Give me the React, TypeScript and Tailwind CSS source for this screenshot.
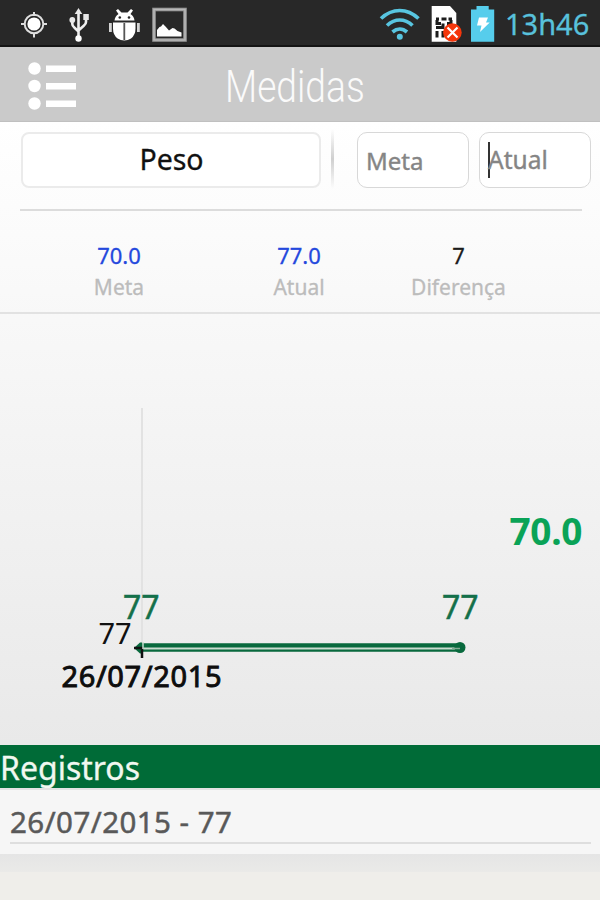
import React from "react";

const stats = [
  { value: "70.0", label: "Meta", color: "text-[#2448dd]", box: "w-[238px]" },
  { value: "77.0", label: "Atual", color: "text-[#2448dd]", box: "w-[122px]" },
  { value: "7", label: "Diferença", color: "text-[#1c1c1c]", box: "w-[197px]" },
];

const StatusBar: React.FC = () => (
  <div className="flex h-[47px] shrink-0 items-start border-b-2 border-[#141414] bg-[#282828]">
    <svg className="shrink-0" width="500" height="45" viewBox="0 0 500 45">
      {/* gps */}
      <g stroke="#dedede" fill="none" strokeWidth="2">
        <circle cx="34" cy="24" r="9.3" />
        <path d="M34 12v4M34 33v4.5M21 24h4M43 24h4" />
        <circle cx="34" cy="24" r="6.6" fill="#fff" stroke="none" />
      </g>
      {/* usb */}
      <g stroke="#f0f0f0" fill="none" strokeWidth="2.6">
        <path d="M78.5 13v25M72.3 20v4q0 2 2 3.5l4.200 4M86 17v5q0 2-2 3.500l-5.500 5" />
        <path d="M78.5 8l3.8 6h-7.600z" fill="#e8e8e8" stroke="none" />
        <circle cx="78.5" cy="38.500" r="3.2" fill="#fff" stroke="none" />
        <circle cx="72.3" cy="20" r="2.900" fill="#e8e8e8" stroke="none" />
        <rect x="83.300" y="14" width="5.500" height="6" fill="#e8e8e8" stroke="none" />
      </g>
      {/* debug bug */}
      <g fill="#fff">
        <path d="M114.500 20.500q.5-4.500 4-6.500l-2.500-3.500 2-1.500 3.500 3.500h6l3.500-3.500 2 1.500-2.500 3.500q3.500 2 4 6.500z" />
        <path d="M113 22.500h22.500v6q0 6.500-4.500 10-3 2-6.700 2t-6.700-2q-4.600-3.500-4.600-10z" />
        <path d="M124.300 23v17" stroke="#555" strokeWidth="1.800" />
        <circle cx="119.800" cy="17.500" r="1.300" fill="#282828" />
        <circle cx="129" cy="17.500" r="1.300" fill="#282828" />
        <path d="M109 23h2.800v9h-2.800zM137 23h2.800v9h-2.800z" fill="#d5d5d5" />
      </g>
      {/* picture */}
      <rect x="154" y="9.500" width="31" height="30.500" fill="none" stroke="#959595" strokeWidth="3.600" />
      <rect x="154" y="9.500" width="31" height="30.500" fill="none" stroke="#b8b8b8" strokeWidth="1.500" />
      <path d="M157 36.500v-6.500l2.500-3 1.500-.5 2-2.500 2.500 2.500 3.500 4 3.500-2.500 2 .5 3 2.500 4 1.500v4z" fill="#fff" />
      {/* wifi */}
      <g fill="none" stroke="#58c5e0" strokeWidth="3.700">
        <path d="M381 18.500q8.500-8 18.700-8t18.800 8" />
        <path d="M387 25.500q6-5.500 12.800-5.500t12.700 5.500" />
        <path d="M392.500 32q3.500-3 7.300-3t7.200 3" />
        <circle cx="399.800" cy="36.800" r="3" fill="#58c5e0" stroke="none" />
      </g>
      {/* sim card */}
      <path d="M431.700 6h18.300l6.300 7v28.700h-24.600z" fill="#fff" />
      <g stroke="#1d1d1d" strokeWidth="3" fill="none">
        <path d="M436 19h3M441.500 19h5M448.500 19h3.500M437 20v3.500h4M451 20v3.500h-4M436 27.500h7v-4M447 26.500h5M437 31v6.500M443 31v6.500" />
      </g>
      <circle cx="452.400" cy="32.500" r="9.300" fill="#f5360b" />
      <path d="M447.500 27.500l10 10M457.500 27.500l-10 10" stroke="#fff" strokeWidth="2.200" />
      {/* battery */}
      <path d="M471 9.500h5.500v-3.500h12.200v3.500h5.500v32.300h-23.200z" fill="#56cdec" />
      <path d="M479 17.500h9l-2 5h3.700l-9.700 9.500 1.500-6.500h-4.500z" fill="#fff" />
    </svg>
    <span className="ml-[5px] mt-[4px] text-[29px] leading-[40px] text-[#58c1dc] [-webkit-text-stroke:0.3px_#58c1dc]">13h46</span>
  </div>
);

const Header: React.FC = () => (
  <header className="flex h-[75px] shrink-0 items-center border-b border-[#c0c0c0] bg-[#cacaca] pl-[28px]">
    <svg className="mt-[3px]" width="49" height="50" viewBox="0 0 49 50" fill="#fff">
      <circle cx="6.500" cy="7.500" r="6.200" />
      <circle cx="6.500" cy="25" r="6.200" />
      <circle cx="6.500" cy="42.500" r="6.200" />
      <rect x="18" y="4.500" width="30" height="6.500" />
      <rect x="18" y="22" width="30" height="6.500" />
      <rect x="18" y="39.500" width="30" height="6.500" />
    </svg>
    <h1 className="ml-[148px] mt-[5px] origin-left scale-x-[0.835] font-['Roboto'] text-[44.500px] leading-[50px] font-light text-[#fafafa]">
      Medidas
    </h1>
  </header>
);

const Filters: React.FC = () => (
  <div className="flex h-[87px] shrink-0 pl-[21px] pt-[10px]">
    <button className="h-[56px] w-[300px] rounded-lg border-2 border-[#ebebeb] bg-white pb-px pl-px text-[28.500px] leading-none text-[#111] [-webkit-text-stroke:0.3px_#111]">
      Peso
    </button>
    <div className="ml-[10px] -mt-[3px] h-[60px] w-[3px] bg-linear-to-b from-transparent via-[#cfcfcf] to-transparent" />
    <div className="ml-[23px] flex h-[56px] w-[112px] items-center rounded-[10px] border border-[#d8d8d8] bg-white pt-px pl-[8px] text-[24px] text-[#858585] [-webkit-text-stroke:0.4px_#858585]">
      Meta
    </div>
    <div className="ml-[10px] flex h-[56px] w-[112px] items-center rounded-[10px] border border-[#d8d8d8] bg-white pt-px pl-[8px] text-[24.500px] text-[#858585] [-webkit-text-stroke:0.4px_#858585]">
      <span className="-mr-[2px] -mt-[2px] h-[36px] w-[2px] bg-[#333]" />
      Atual
    </div>
  </div>
);

const Chart: React.FC = () => (
  <svg className="block shrink-0" width="600" height="431" viewBox="0 314 600 431">
    <path d="M142 408v240" stroke="#e2e2e2" strokeWidth="2" />
    <path d="M142 647.500h318" stroke="#08693d" strokeWidth="8.500" />
    <path d="M143 648.500h317" stroke="#c9dccf" strokeWidth="2" />
    <circle cx="460" cy="647.500" r="5.500" fill="#08693d" />
    <path d="M452 648.500h8" stroke="#83aa93" strokeWidth="1.500" />
    <path d="M134 648l6-5.500h2v11h-2z" fill="#08693d" />
    <path d="M134 648h8v10" fill="none" stroke="#111" strokeWidth="2.500" />
    <path d="M143 642v7" stroke="#c9dccf" strokeWidth="1.500" />
    <g fill="#14704a" stroke="#14704a" strokeWidth="0.500" fontSize="32">
      <text x="123" y="619">77</text>
      <text x="442" y="619">77</text>
    </g>
    <text x="98.500" y="643.500" fontSize="29" fill="#111">77</text>
    <text x="61.500" y="686.500" fontSize="29" fill="#0d0d0d" stroke="#0d0d0d" strokeWidth="0.900" textLength="160">
      26/07/2015
    </text>
    <text x="509.500" y="545" fontSize="37" fontWeight="700" fill="#0aa357" textLength="73">70.0</text>
  </svg>
);

const App: React.FC = () => {
  return (
    <main className="flex h-[900px] w-[600px] flex-col overflow-hidden bg-[#efeeea] font-['Noto_Sans','Open_Sans',sans-serif]">
      <StatusBar />
      <Header />
      <section className="flex h-[623px] shrink-0 flex-col bg-linear-to-b from-white to-[#e9e9e9]">
        <Filters />
        <div className="ml-[20px] h-[2px] w-[562px] shrink-0 bg-[#dcdcdc]" />
        <div className="flex h-[103px] shrink-0 border-b-2 border-[#e2e2e2] pt-[28px]">
          {stats.map((s) => (
            <div key={s.label} className={`flex flex-col items-center ${s.box}`}>
              <span className={`text-[22px] leading-[32px] [-webkit-text-stroke:0.3px_currentColor] ${s.color}`}>
                {s.value}
              </span>
              <span className="text-[21px] leading-[32px] text-[#bcbcbc] [-webkit-text-stroke:0.3px_#bcbcbc]">
                {s.label}
              </span>
            </div>
          ))}
        </div>
        <Chart />
      </section>
      <h2 className="h-[43px] shrink-0 bg-[#006b37] pt-px text-[32px] leading-[43px] text-[#f1f8f0] [-webkit-text-stroke:0.3px_#f1f8f0]">
        Registros
      </h2>
      <ul className="h-[66px] shrink-0 border-t-2 border-[#e3e3e3] bg-[#f6f6f6] pl-[10px] pt-[12px]">
        <li className="h-[42px] w-[581px] border-b-2 border-[#dedede] text-[29.500px] leading-[40px] tracking-[0.45px] text-[#595959] [-webkit-text-stroke:0.5px_#595959]">
          26/07/2015 - 77
        </li>
      </ul>
      <div className="h-[18px] shrink-0 bg-linear-to-b from-[#e5e5e5] to-[#eaeae8]" />
    </main>
  );
};

export default App;
